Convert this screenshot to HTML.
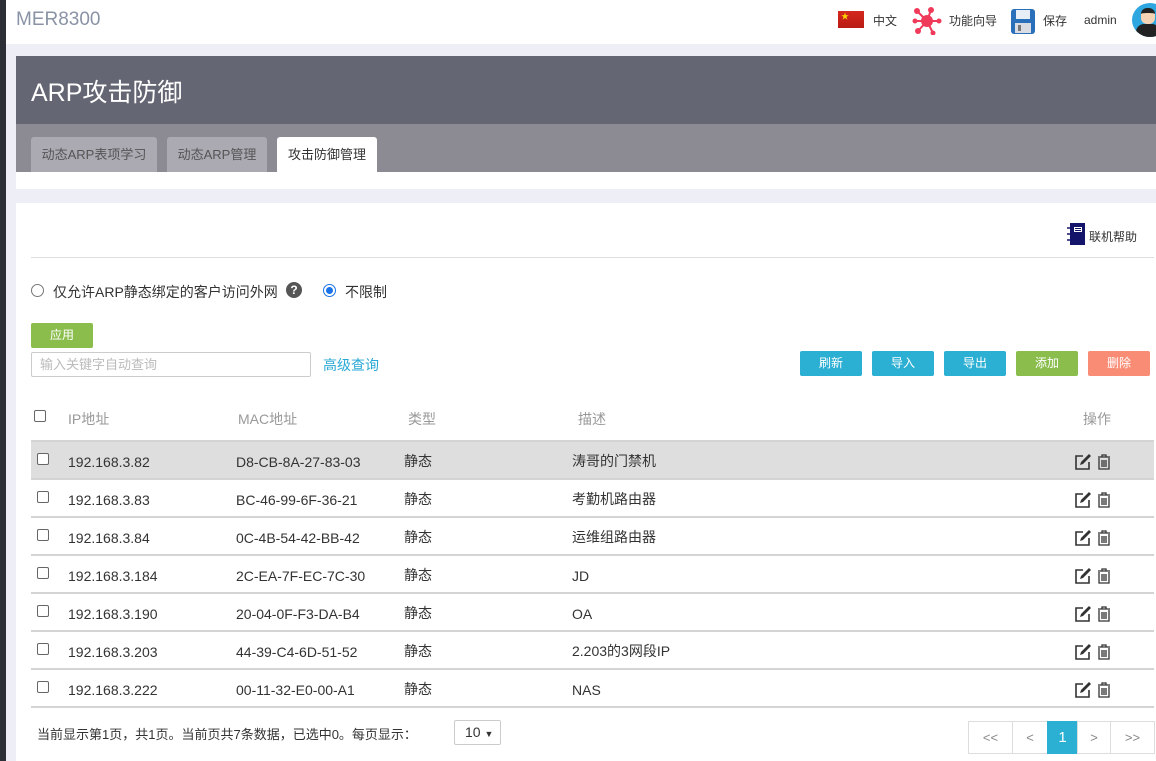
<!DOCTYPE html>
<html><head><meta charset="utf-8"><style>
*{margin:0;padding:0;box-sizing:border-box}
body{width:1156px;height:761px;overflow:hidden;background:#eeeef6;font-family:"Liberation Sans","Noto Sans CJK SC",sans-serif;font-size:13px;color:#333;position:relative}
.a{position:absolute;white-space:nowrap}
.btn{position:absolute;height:25px;line-height:25px;text-align:center;color:#fff;font-size:12px;border-radius:2px}
.row{position:absolute;left:31px;width:1123px;height:38px;border-bottom:2px solid #d4d4d4}
.row span{position:absolute;top:10px;height:18px;line-height:18px;font-size:14px;color:#333}
.cb{position:absolute;left:6px;top:11px;width:12px;height:12px;border:1px solid #666;border-radius:2px;background:#fff}
.ic{position:absolute;left:1043px;top:12px}
.pg{position:absolute;top:721px;height:33px;border:1px solid #ddd;background:#fff;color:#888;text-align:center;line-height:31px;font-size:13px}
</style></head><body>
<div class="a" style="left:0;top:0;width:6px;height:761px;background:#2d2f36"></div>
<div class="a" style="left:6px;top:0;width:1150px;height:44px;background:#fff"></div>
<div class="a" style="left:16px;top:9px;font-size:19px;color:#8a93a6">MER8300</div>
<div class="a" style="left:838px;top:11px;width:26px;height:17px;background:linear-gradient(#d5281e,#b91c14)"><span style="position:absolute;left:3px;top:0;color:#fcd400;font-size:8px">★</span></div>
<div class="a" style="left:873px;top:12px;font-size:12px">中文</div>
<svg class="a" style="left:912px;top:7px" width="30" height="28" viewBox="0 0 30 28"><g stroke="#f03a5a" stroke-width="2"><line x1="15" y1="14" x2="5" y2="4"/><line x1="15" y1="14" x2="19" y2="3"/><line x1="15" y1="14" x2="27" y2="14"/><line x1="15" y1="14" x2="6" y2="24"/><line x1="15" y1="14" x2="21" y2="26"/><line x1="15" y1="14" x2="3" y2="14"/></g><g fill="#f03a5a"><circle cx="15" cy="14" r="6"/><circle cx="5" cy="4" r="3"/><circle cx="19" cy="3" r="3"/><circle cx="27" cy="14" r="2.5"/><circle cx="6" cy="24" r="3"/><circle cx="21" cy="26" r="2.5"/><circle cx="3" cy="14" r="2.5"/></g></svg>
<div class="a" style="left:949px;top:12px;font-size:12px">功能向导</div>
<svg class="a" style="left:1011px;top:9px" width="24" height="25" viewBox="0 0 24 25"><rect x="0" y="0" width="24" height="25" rx="3" fill="#2a6fba"/><rect x="5" y="1" width="14" height="9" fill="#e8eef6"/><rect x="4" y="14" width="16" height="10" fill="#d9dde3"/><rect x="7" y="16" width="3" height="6" fill="#777"/></svg>
<div class="a" style="left:1043px;top:12px;font-size:12px">保存</div>
<div class="a" style="left:1084px;top:13px;font-size:12px">admin</div>
<div class="a" style="left:1132px;top:3px;width:36px;height:34px;border-radius:50%;background:#2ea6e0;overflow:hidden"><div style="position:absolute;left:9px;top:5px;width:14px;height:16px;border-radius:6px;background:#f5d3b5;border-top:5px solid #222"></div><div style="position:absolute;left:4px;top:21px;width:24px;height:14px;background:#222;border-radius:8px 8px 0 0"></div></div>

<div class="a" style="left:16px;top:56px;width:1140px;height:68px;background:#656673"></div>
<div class="a" style="left:31px;top:73px;font-size:25px;color:#fff">ARP攻击防御</div>
<div class="a" style="left:16px;top:124px;width:1140px;height:48px;background:#8c8a93"></div>
<div class="a" style="left:31px;top:137px;width:126px;height:35px;background:#aba9b2;border-radius:3px 3px 0 0;color:#555;font-size:13px;line-height:36px;text-align:center">动态ARP表项学习</div>
<div class="a" style="left:167px;top:137px;width:100px;height:35px;background:#aba9b2;border-radius:3px 3px 0 0;color:#555;font-size:13px;line-height:36px;text-align:center">动态ARP管理</div>
<div class="a" style="left:277px;top:137px;width:100px;height:35px;background:#fff;border-radius:3px 3px 0 0;color:#333;font-size:13px;line-height:36px;text-align:center">攻击防御管理</div>
<div class="a" style="left:16px;top:172px;width:1140px;height:17px;background:#fff"></div>

<div class="a" style="left:16px;top:203px;width:1140px;height:558px;background:#fff"></div>
<svg class="a" style="left:1066px;top:223px" width="20" height="22" viewBox="0 0 20 22"><rect x="4" y="0" width="15" height="22" fill="#14146b"/><rect x="8" y="4" width="8" height="5" fill="#fff"/><rect x="9" y="5" width="6" height="1" fill="#14146b"/><rect x="9" y="7" width="6" height="1" fill="#14146b"/><g fill="none" stroke="#14146b" stroke-width="1.5"><path d="M1 5h4M1 11h4M1 17h4"/></g></svg>
<div class="a" style="left:1089px;top:228px;font-size:12px">联机帮助</div>
<div class="a" style="left:31px;top:257px;width:1123px;height:1px;background:#ddd"></div>

<div class="a" style="left:31px;top:284px;width:13px;height:13px;border:1px solid #777;border-radius:50%"></div>
<div class="a" style="left:53px;top:282px;font-size:14px">仅允许ARP静态绑定的客户访问外网</div>
<div class="a" style="left:286px;top:282px;width:16px;height:16px;border-radius:50%;background:#555;color:#fff;font-size:12px;font-weight:bold;text-align:center;line-height:16px">?</div>
<div class="a" style="left:323px;top:284px;width:13px;height:13px;border:1px solid #1a73e8;border-radius:50%"><div style="position:absolute;left:2px;top:2px;width:7px;height:7px;border-radius:50%;background:#1a73e8"></div></div>
<div class="a" style="left:345px;top:282px;font-size:14px">不限制</div>

<div class="btn" style="left:31px;top:323px;width:62px;background:#8abd4c">应用</div>
<div class="a" style="left:31px;top:352px;width:280px;height:25px;border:1px solid #ccc;border-radius:2px;color:#bbb;font-size:13px;line-height:23px;padding-left:8px">输入关键字自动查询</div>
<div class="a" style="left:323px;top:355px;font-size:14px;color:#2aa8d5">高级查询</div>
<div class="btn" style="left:800px;top:351px;width:62px;background:#2bafd3">刷新</div>
<div class="btn" style="left:872px;top:351px;width:62px;background:#2bafd3">导入</div>
<div class="btn" style="left:944px;top:351px;width:62px;background:#2bafd3">导出</div>
<div class="btn" style="left:1016px;top:351px;width:62px;background:#8abd4c">添加</div>
<div class="btn" style="left:1088px;top:351px;width:62px;background:#f98c75">删除</div>

<div class="a" style="left:34px;top:410px;width:12px;height:12px;border:1px solid #666;border-radius:2px"></div>
<div class="a" style="left:68px;top:409px;font-size:14px;color:#999">IP地址</div>
<div class="a" style="left:238px;top:409px;font-size:14px;color:#999">MAC地址</div>
<div class="a" style="left:408px;top:409px;font-size:14px;color:#999">类型</div>
<div class="a" style="left:578px;top:409px;font-size:14px;color:#999">描述</div>
<div class="a" style="left:1083px;top:409px;font-size:14px;color:#999">操作</div>
<div class="a" style="left:31px;top:440px;width:1123px;height:2px;background:#d4d4d4"></div>

<div class="row" style="top:442px;background:#dedede"><div class="cb"></div><span style="left:37px;top:11px">192.168.3.82</span><span style="left:205px;top:11px">D8-CB-8A-27-83-03</span><span style="left:373px">静态</span><span style="left:541px">涛哥的门禁机</span><svg class="ic" width="40" height="16" viewBox="0 0 40 16"><path d="M9 2H2v13h13V8" fill="none" stroke="#333" stroke-width="1.6"/><path d="M6 11l1-3 8-8 2 2-8 8z" fill="#333"/><path d="M24 3h12M28 3V1h4v2M25 4v11h10V4M28 6v7M30 6v7M32 6v7" fill="none" stroke="#333" stroke-width="1.3"/></svg></div>
<div class="row" style="top:480px"><div class="cb"></div><span style="left:37px;top:11px">192.168.3.83</span><span style="left:205px;top:11px">BC-46-99-6F-36-21</span><span style="left:373px">静态</span><span style="left:541px">考勤机路由器</span><svg class="ic" width="40" height="16" viewBox="0 0 40 16"><path d="M9 2H2v13h13V8" fill="none" stroke="#333" stroke-width="1.6"/><path d="M6 11l1-3 8-8 2 2-8 8z" fill="#333"/><path d="M24 3h12M28 3V1h4v2M25 4v11h10V4M28 6v7M30 6v7M32 6v7" fill="none" stroke="#333" stroke-width="1.3"/></svg></div>
<div class="row" style="top:518px"><div class="cb"></div><span style="left:37px;top:11px">192.168.3.84</span><span style="left:205px;top:11px">0C-4B-54-42-BB-42</span><span style="left:373px">静态</span><span style="left:541px">运维组路由器</span><svg class="ic" width="40" height="16" viewBox="0 0 40 16"><path d="M9 2H2v13h13V8" fill="none" stroke="#333" stroke-width="1.6"/><path d="M6 11l1-3 8-8 2 2-8 8z" fill="#333"/><path d="M24 3h12M28 3V1h4v2M25 4v11h10V4M28 6v7M30 6v7M32 6v7" fill="none" stroke="#333" stroke-width="1.3"/></svg></div>
<div class="row" style="top:556px"><div class="cb"></div><span style="left:37px;top:11px">192.168.3.184</span><span style="left:205px;top:11px">2C-EA-7F-EC-7C-30</span><span style="left:373px">静态</span><span style="left:541px;top:11px">JD</span><svg class="ic" width="40" height="16" viewBox="0 0 40 16"><path d="M9 2H2v13h13V8" fill="none" stroke="#333" stroke-width="1.6"/><path d="M6 11l1-3 8-8 2 2-8 8z" fill="#333"/><path d="M24 3h12M28 3V1h4v2M25 4v11h10V4M28 6v7M30 6v7M32 6v7" fill="none" stroke="#333" stroke-width="1.3"/></svg></div>
<div class="row" style="top:594px"><div class="cb"></div><span style="left:37px;top:11px">192.168.3.190</span><span style="left:205px;top:11px">20-04-0F-F3-DA-B4</span><span style="left:373px">静态</span><span style="left:541px;top:11px">OA</span><svg class="ic" width="40" height="16" viewBox="0 0 40 16"><path d="M9 2H2v13h13V8" fill="none" stroke="#333" stroke-width="1.6"/><path d="M6 11l1-3 8-8 2 2-8 8z" fill="#333"/><path d="M24 3h12M28 3V1h4v2M25 4v11h10V4M28 6v7M30 6v7M32 6v7" fill="none" stroke="#333" stroke-width="1.3"/></svg></div>
<div class="row" style="top:632px"><div class="cb"></div><span style="left:37px;top:11px">192.168.3.203</span><span style="left:205px;top:11px">44-39-C4-6D-51-52</span><span style="left:373px">静态</span><span style="left:541px">2.203的3网段IP</span><svg class="ic" width="40" height="16" viewBox="0 0 40 16"><path d="M9 2H2v13h13V8" fill="none" stroke="#333" stroke-width="1.6"/><path d="M6 11l1-3 8-8 2 2-8 8z" fill="#333"/><path d="M24 3h12M28 3V1h4v2M25 4v11h10V4M28 6v7M30 6v7M32 6v7" fill="none" stroke="#333" stroke-width="1.3"/></svg></div>
<div class="row" style="top:670px"><div class="cb"></div><span style="left:37px;top:11px">192.168.3.222</span><span style="left:205px;top:11px">00-11-32-E0-00-A1</span><span style="left:373px">静态</span><span style="left:541px;top:11px">NAS</span><svg class="ic" width="40" height="16" viewBox="0 0 40 16"><path d="M9 2H2v13h13V8" fill="none" stroke="#333" stroke-width="1.6"/><path d="M6 11l1-3 8-8 2 2-8 8z" fill="#333"/><path d="M24 3h12M28 3V1h4v2M25 4v11h10V4M28 6v7M30 6v7M32 6v7" fill="none" stroke="#333" stroke-width="1.3"/></svg></div>

<div class="a" style="left:37px;top:724px;font-size:13px;color:#333">当前显示第1页，共1页。当前页共7条数据，已选中0。每页显示：</div>
<div class="a" style="left:454px;top:720px;width:47px;height:25px;border:1px solid #ccc;border-radius:2px;font-size:14px;line-height:23px;padding-left:10px">10 <span style="font-size:9px">▼</span></div>

<div class="pg" style="left:968px;width:45px">&lt;&lt;</div>
<div class="pg" style="left:1012px;width:36px">&lt;</div>
<div class="pg" style="left:1047px;width:31px;background:#2bafd3;border-color:#2bafd3;color:#fff;font-size:15px">1</div>
<div class="pg" style="left:1077px;width:34px">&gt;</div>
<div class="pg" style="left:1110px;width:45px">&gt;&gt;</div>
</body></html>
